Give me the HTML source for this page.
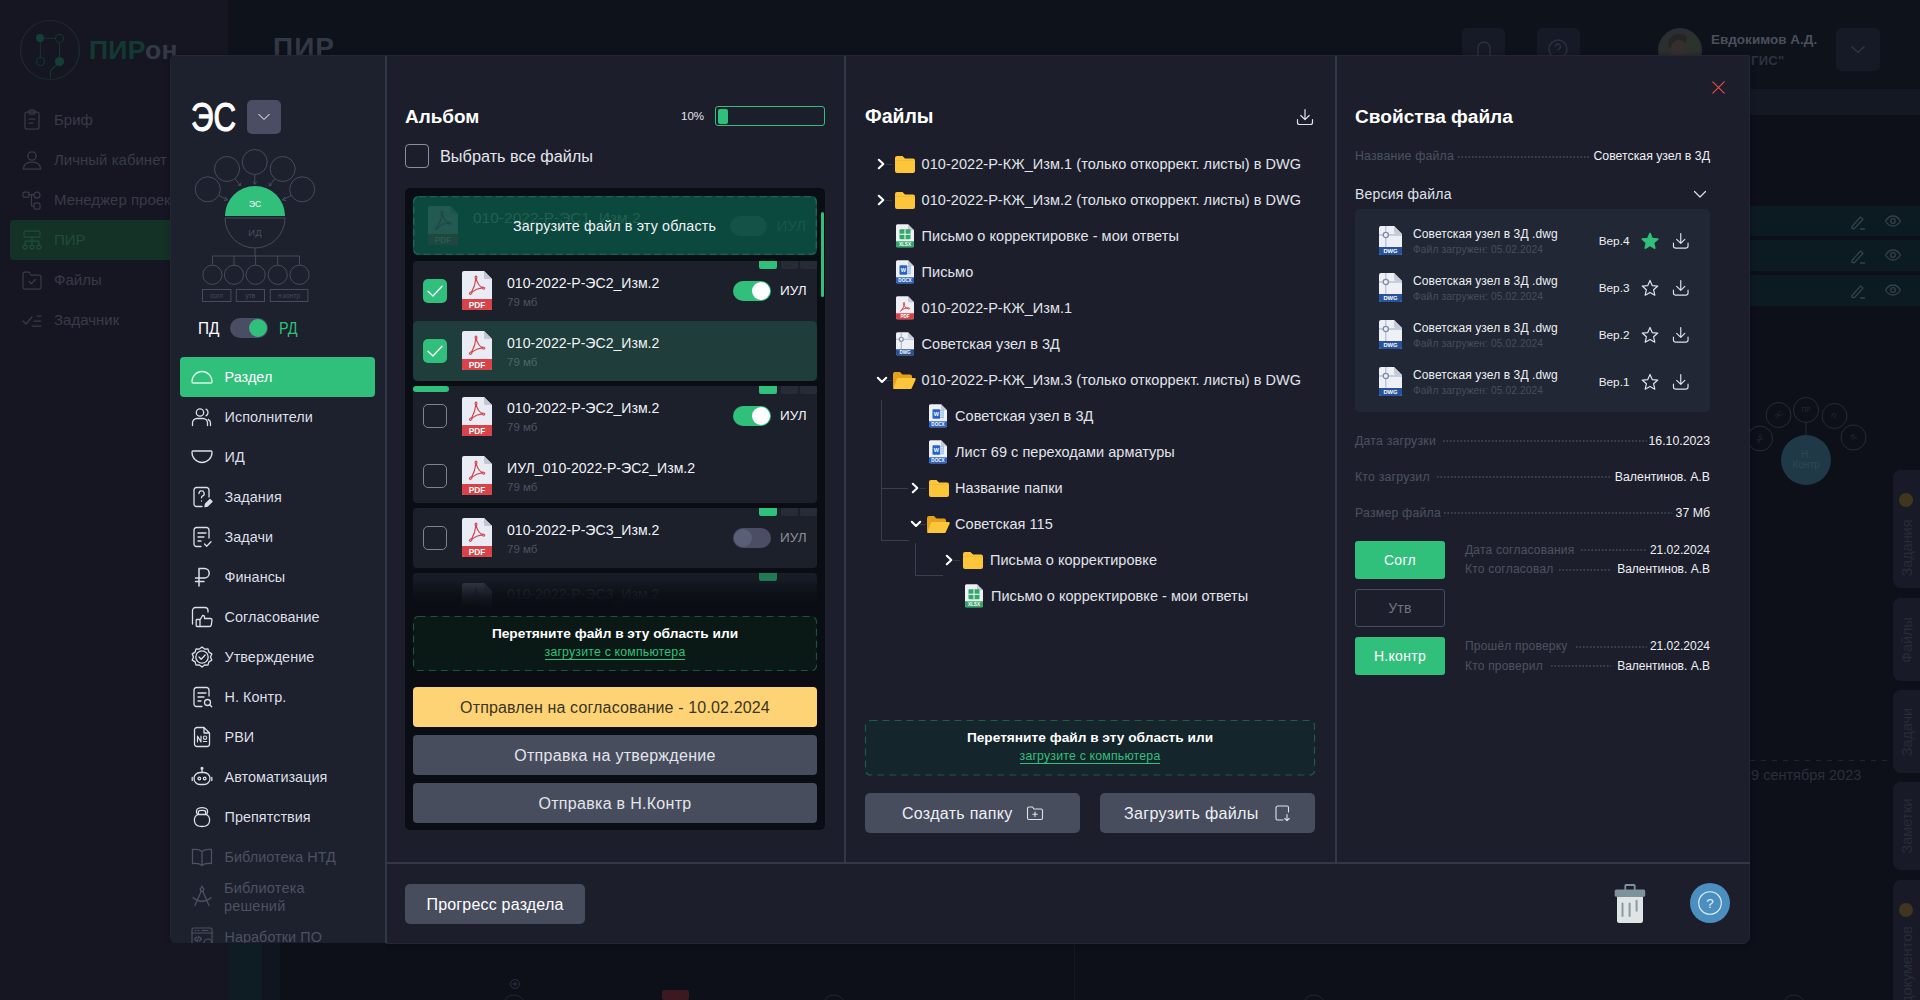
<!DOCTYPE html>
<html lang="ru"><head><meta charset="utf-8"><title>ПИРон</title>
<style>
html,body{margin:0;padding:0;}
body{width:1920px;height:1000px;overflow:hidden;background:#0f121c;position:relative;font-family:"Liberation Sans", sans-serif;}
.a{position:absolute;box-sizing:border-box;}
.t{white-space:nowrap;}
svg{overflow:visible;}
</style></head><body>
<div class="a" style="left:0px;top:0px;width:228px;height:1000px;background:#161622;"></div>
<div class="a" style="left:228px;top:0px;width:1692px;height:89px;background:#0e121b;"></div>
<div class="a" style="left:228px;top:89px;width:1692px;height:26px;background:#141823;"></div>
<div class="a" style="left:228px;top:115px;width:1692px;height:885px;background:#0d0f19;"></div>
<svg class="a" style="left:18px;top:18px;" width="64" height="64" viewBox="0 0 64 64" ><circle cx="32" cy="32" r="29.500" fill="none" stroke="#1a2a30" stroke-width="1.200"/><path d="M22 20.200H37.500M22.300 24v15.500M41.500 24.500V39M39.500 46L32.500 52.500V60" fill="none" stroke="#14362f" stroke-width="1.100"/><circle cx="22" cy="20" r="4" fill="#124037"/><circle cx="41.500" cy="20.400" r="4" fill="#161622" stroke="#14362f" stroke-width="1.100"/><circle cx="22.500" cy="43.500" r="4" fill="#161622" stroke="#14362f" stroke-width="1.100"/><circle cx="41.500" cy="43.500" r="4.600" fill="#124037"/></svg>
<div class="a t" style="left:89px;top:32px;font-size:26.500px;line-height:36px;font-weight:700;letter-spacing:0.3px;color:#123a33">ПИР<span style="color:#343947">он</span></div>
<div class="a" style="left:10px;top:220px;width:165px;height:40px;background:#143226;border-radius:4px;"></div>
<div class="a t" style="top:110.00px;font-size:15px;line-height:20px;color:#363b49;left:54px;">Бриф</div>
<div class="a t" style="top:150.00px;font-size:15px;line-height:20px;color:#363b49;left:54px;">Личный кабинет</div>
<div class="a t" style="top:190.00px;font-size:15px;line-height:20px;color:#363b49;left:54px;">Менеджер проектов</div>
<div class="a t" style="top:230.00px;font-size:15px;line-height:20px;color:#214c3d;left:54px;">ПИР</div>
<div class="a t" style="top:270.00px;font-size:15px;line-height:20px;color:#363b49;left:54px;">Файлы</div>
<div class="a t" style="top:310.00px;font-size:15px;line-height:20px;color:#363b49;left:54px;">Задачник</div>
<svg class="a" style="left:20px;top:108px;" width="24" height="24" viewBox="0 0 24 24" ><g fill="none" stroke="#363b49" stroke-width="1.250" stroke-linecap="round" stroke-linejoin="round"><rect x="5" y="4" width="14" height="17" rx="2"/><rect x="9" y="2" width="6" height="4" rx="1"/><path d="M9 11h6M9 15h4"/></g></svg>
<svg class="a" style="left:20px;top:148px;" width="24" height="24" viewBox="0 0 24 24" ><g fill="none" stroke="#363b49" stroke-width="1.250" stroke-linecap="round" stroke-linejoin="round"><circle cx="12" cy="8" r="4.2"/><path d="M3.5 21c0-4.5 3.5-7 8.500-7s8.500 2.500 8.500 7z"/></g></svg>
<svg class="a" style="left:20px;top:188px;" width="24" height="24" viewBox="0 0 24 24" ><g fill="none" stroke="#363b49" stroke-width="1.250" stroke-linecap="round" stroke-linejoin="round"><rect x="3" y="4" width="6" height="5" rx="1"/><rect x="14" y="4" width="6" height="6" rx="3"/><rect x="14" y="15" width="6" height="6" rx="1"/><path d="M9 6.500h5M11.500 6.500v11.500h2.500"/></g></svg>
<svg class="a" style="left:20px;top:228px;" width="24" height="24" viewBox="0 0 24 24" ><g fill="none" stroke="#214c3d" stroke-width="1.250" stroke-linecap="round" stroke-linejoin="round"><rect x="4" y="3" width="16" height="6" rx="1"/><path d="M12 9v4M5 17v-4h14v4"/><circle cx="5" cy="19" r="2"/><circle cx="12" cy="19" r="2"/><circle cx="19" cy="19" r="2"/><path d="M12 13v4"/></g></svg>
<svg class="a" style="left:20px;top:268px;" width="24" height="24" viewBox="0 0 24 24" ><g fill="none" stroke="#363b49" stroke-width="1.250" stroke-linecap="round" stroke-linejoin="round"><path d="M3 6a2 2 0 0 1 2-2h4l2 3h8a2 2 0 0 1 2 2v10a2 2 0 0 1-2 2H5a2 2 0 0 1-2-2z"/><path d="M9 13.500l2.200 2.200L15.500 11.500"/></g></svg>
<svg class="a" style="left:20px;top:308px;" width="24" height="24" viewBox="0 0 24 24" ><g fill="none" stroke="#363b49" stroke-width="1.250" stroke-linecap="round" stroke-linejoin="round"><path d="M3 13l3 3 6-7M12 18h9M14 13h7M17 8h4"/></g></svg>
<div class="a t" style="top:30.00px;font-size:28px;line-height:36px;color:#333846;font-weight:700;letter-spacing:1px;left:273px;">ПИР</div>
<div class="a" style="left:1462px;top:28px;width:43px;height:43px;background:#161a26;border-radius:5px;"></div>
<div class="a" style="left:1537px;top:28px;width:43px;height:43px;background:#161a26;border-radius:5px;"></div>
<div class="a" style="left:1836px;top:28px;width:44px;height:43px;background:#161a26;border-radius:5px;"></div>
<svg class="a" style="left:1472px;top:37px;" width="24" height="24" viewBox="0 0 24 24" ><path d="M6 17V11a6 6 0 0 1 12 0v6l1.500 2h-15z" fill="none" stroke="#2c3140" stroke-width="1.4"/></svg>
<svg class="a" style="left:1546px;top:37px;" width="24" height="24" viewBox="0 0 24 24" ><circle cx="12" cy="12" r="9" fill="none" stroke="#2c3140" stroke-width="1.4"/><path d="M9.500 9.500a2.500 2.500 0 1 1 3.500 2.300c-.7.400-1 .900-1 1.700" fill="none" stroke="#2c3140" stroke-width="1.4"/></svg>
<svg class="a" style="left:1848px;top:42px;" width="20" height="14" viewBox="0 0 20 14" ><path d="M3.500 4.500l6.500 6 6.500-6" fill="none" stroke="#333846" stroke-width="1.200"/></svg>
<div class="a" style="left:1658px;top:28px;width:44px;height:44px;background:#2d2e2f;border-radius:22px;overflow:hidden;border:1.500px solid #2a2e3b;"><div class="a" style="left:9px;top:5px;width:22px;height:14px;border-radius:11px 11px 4px 4px;background:#262525"></div><div class="a" style="left:12px;top:11px;width:16px;height:22px;border-radius:8px;background:#35302f"></div><div class="a" style="left:27px;top:6px;width:14px;height:26px;border-radius:7px;background:#2c322c"></div></div>
<div class="a t" style="top:31.00px;font-size:13.5px;line-height:18px;color:#4a4f5d;font-weight:700;left:1711px;">Евдокимов А.Д.</div>
<div class="a t" style="top:51.50px;font-size:13px;line-height:17px;color:#2e3340;font-weight:700;letter-spacing:0.3px;left:1751px;">ГИС"</div>
<div class="a" style="left:1750px;top:205.5px;width:170px;height:30.5px;background:#0c1a22;"></div>
<svg class="a" style="left:1849px;top:211.75px;" width="18" height="18" viewBox="0 0 18 18" ><path d="M3 14.500l8.500-9.500 2.500 2.300-8.500 9.200H3z M11 17h5" fill="none" stroke="#34404b" stroke-width="1.3" stroke-linejoin="round"/></svg>
<svg class="a" style="left:1884px;top:211.75px;" width="18" height="18" viewBox="0 0 18 18" ><path d="M1.500 9c2-3.300 4.500-5 7.500-5s5.500 1.700 7.500 5c-2 3.300-4.500 5-7.500 5s-5.500-1.700-7.500-5z" fill="none" stroke="#34404b" stroke-width="1.3"/><circle cx="9" cy="9" r="2.300" fill="none" stroke="#34404b" stroke-width="1.3"/></svg>
<div class="a" style="left:1750px;top:239.5px;width:170px;height:31px;background:#0c1a22;"></div>
<svg class="a" style="left:1849px;top:246.0px;" width="18" height="18" viewBox="0 0 18 18" ><path d="M3 14.500l8.500-9.500 2.500 2.300-8.500 9.200H3z M11 17h5" fill="none" stroke="#34404b" stroke-width="1.3" stroke-linejoin="round"/></svg>
<svg class="a" style="left:1884px;top:246.0px;" width="18" height="18" viewBox="0 0 18 18" ><path d="M1.500 9c2-3.300 4.500-5 7.500-5s5.500 1.700 7.500 5c-2 3.300-4.500 5-7.500 5s-5.500-1.700-7.500-5z" fill="none" stroke="#34404b" stroke-width="1.3"/><circle cx="9" cy="9" r="2.300" fill="none" stroke="#34404b" stroke-width="1.3"/></svg>
<div class="a" style="left:1750px;top:274.5px;width:170px;height:31px;background:#0c1a22;"></div>
<svg class="a" style="left:1849px;top:281.0px;" width="18" height="18" viewBox="0 0 18 18" ><path d="M3 14.500l8.500-9.500 2.500 2.300-8.500 9.200H3z M11 17h5" fill="none" stroke="#34404b" stroke-width="1.3" stroke-linejoin="round"/></svg>
<svg class="a" style="left:1884px;top:281.0px;" width="18" height="18" viewBox="0 0 18 18" ><path d="M1.500 9c2-3.300 4.500-5 7.500-5s5.500 1.700 7.500 5c-2 3.300-4.500 5-7.500 5s-5.500-1.700-7.500-5z" fill="none" stroke="#34404b" stroke-width="1.3"/><circle cx="9" cy="9" r="2.300" fill="none" stroke="#34404b" stroke-width="1.3"/></svg>
<svg class="a" style="left:1741.2px;top:389.6px;" width="140" height="100" viewBox="0 0 140 100" ><circle cx="19" cy="48.5" r="12.500" fill="none" stroke="#272c39" stroke-width="1"/><text x="19" y="50.7" text-anchor="middle" font-size="6.500" fill="#272c39" font-family="Liberation Sans, sans-serif" transform="rotate(-60 19 48.5)">АР</text><circle cx="37.5" cy="25" r="12.500" fill="none" stroke="#272c39" stroke-width="1"/><text x="37.5" y="27.2" text-anchor="middle" font-size="6.500" fill="#272c39" font-family="Liberation Sans, sans-serif" transform="rotate(-35 37.5 25)">ЭС</text><circle cx="65" cy="20" r="12.500" fill="none" stroke="#272c39" stroke-width="1"/><text x="65" y="22.2" text-anchor="middle" font-size="6.500" fill="#272c39" font-family="Liberation Sans, sans-serif" transform="rotate(0 65 20)">ПР</text><circle cx="93.5" cy="26" r="12.500" fill="none" stroke="#272c39" stroke-width="1"/><text x="93.5" y="28.2" text-anchor="middle" font-size="6.500" fill="#272c39" font-family="Liberation Sans, sans-serif" transform="rotate(35 93.5 26)">П.</text><circle cx="112.5" cy="47.5" r="12.500" fill="none" stroke="#272c39" stroke-width="1"/><text x="112.5" y="49.7" text-anchor="middle" font-size="6.500" fill="#272c39" font-family="Liberation Sans, sans-serif" transform="rotate(60 112.5 47.5)">КГ</text><path d="M65 32.500v13" stroke="#272c39" stroke-width="1"/><circle cx="65" cy="70" r="25" fill="#1f3947"/><text x="65" y="67.500" text-anchor="middle" font-size="10" fill="#2b4a58" font-family="Liberation Sans, sans-serif">Н.</text><text x="65" y="78" text-anchor="middle" font-size="10" fill="#2b4a58" font-family="Liberation Sans, sans-serif">Контр</text></svg>
<svg class="a" style="left:1750px;top:760px;" width="143" height="1" viewBox="0 0 143 1" ><path d="M0 .5h143" stroke="#1f2431" stroke-width="1" stroke-dasharray="5 6"/></svg>
<div class="a t" style="top:765.80px;font-size:14.5px;line-height:19px;color:#2a2f3b;left:1743px;">29 сентября 2023</div>
<div class="a" style="left:1893px;top:470px;width:40px;height:118px;background:#181b27;border-radius:8px;"></div>
<div class="a t" style="left:1847px;top:539.0px;width:120px;height:18px;line-height:18px;text-align:center;font-size:14.400px;color:#272c38;transform:rotate(-90deg);">Задания</div>
<div class="a" style="left:1893px;top:598px;width:40px;height:83px;background:#181b27;border-radius:8px;"></div>
<div class="a t" style="left:1847px;top:630.5px;width:120px;height:18px;line-height:18px;text-align:center;font-size:14.400px;color:#272c38;transform:rotate(-90deg);">Файлы</div>
<div class="a" style="left:1893px;top:690px;width:40px;height:83px;background:#181b27;border-radius:8px;"></div>
<div class="a t" style="left:1847px;top:722.5px;width:120px;height:18px;line-height:18px;text-align:center;font-size:14.400px;color:#272c38;transform:rotate(-90deg);">Задачи</div>
<div class="a" style="left:1893px;top:782px;width:40px;height:88px;background:#181b27;border-radius:8px;"></div>
<div class="a t" style="left:1847px;top:817.0px;width:120px;height:18px;line-height:18px;text-align:center;font-size:14.400px;color:#272c38;transform:rotate(-90deg);">Заметки</div>
<div class="a" style="left:1893px;top:880px;width:40px;height:130px;background:#181b27;border-radius:8px;"></div>
<div class="a t" style="left:1847px;top:956.0px;width:120px;height:18px;line-height:18px;text-align:center;font-size:14.400px;color:#272c38;transform:rotate(-90deg);">документов</div>
<div class="a" style="left:1898.5px;top:493px;width:14px;height:14px;background:#40361f;border-radius:7px;"></div>
<div class="a" style="left:1898.5px;top:903px;width:14px;height:14px;background:#40361f;border-radius:7px;"></div>
<div class="a" style="left:228px;top:943px;width:34px;height:57px;background:#0e1c23;"></div>
<div class="a" style="left:262px;top:943px;width:18px;height:57px;background:#101620;"></div>
<svg class="a" style="left:505px;top:975px;" width="22" height="25" viewBox="0 0 22 25" ><circle cx="10" cy="9" r="4.500" fill="none" stroke="#2c3140" stroke-width="1"/><path d="M10 6.500v5M7.500 9h5" stroke="#2c3140" stroke-width="1"/></svg>
<div class="a" style="left:662px;top:990px;width:27px;height:10px;background:#3c1820;border-radius:2px;"></div>
<svg class="a" style="left:502px;top:993px;" width="24" height="10" viewBox="0 0 24 10" ><circle cx="12" cy="13" r="11" fill="none" stroke="#222734" stroke-width="1"/></svg>
<svg class="a" style="left:822px;top:993px;" width="24" height="10" viewBox="0 0 24 10" ><circle cx="12" cy="13" r="11" fill="none" stroke="#222734" stroke-width="1"/></svg>
<svg class="a" style="left:1302px;top:993px;" width="24" height="10" viewBox="0 0 24 10" ><circle cx="12" cy="13" r="11" fill="none" stroke="#222734" stroke-width="1"/></svg>
<svg class="a" style="left:1782px;top:993px;" width="24" height="10" viewBox="0 0 24 10" ><circle cx="12" cy="13" r="11" fill="none" stroke="#222734" stroke-width="1"/></svg>
<div class="a" style="left:1074px;top:943px;width:1px;height:57px;background:#151925;"></div>
<div class="a" style="left:170px;top:55px;width:1580px;height:888.5px;background:#1c1f2b;border-radius:5px 0 7px 7px;box-shadow:0 0 6px rgba(0,0,0,.25);border:1px solid #232734;overflow:hidden;"><div class="a" style="left:0;top:0;width:215px;height:888px;background:#1d202d"></div></div>
<div class="a" style="left:384.5px;top:56px;width:2px;height:887px;background:#333847;"></div>
<div class="a" style="left:844.2px;top:56px;width:2px;height:806px;background:#333847;"></div>
<div class="a" style="left:1334.5px;top:56px;width:2px;height:806px;background:#333847;"></div>
<div class="a" style="left:386px;top:862px;width:1364px;height:2px;background:#333847;"></div>
<div class="a t" style="top:91.00px;font-size:40px;line-height:52px;color:#fff;left:190.5px;transform:scaleX(.78);transform-origin:0 50%;-webkit-text-stroke:1.1px #fff;">ЭС</div>
<div class="a" style="left:247px;top:100px;width:34px;height:34px;background:#4a4d63;border-radius:5px;"></div>
<svg class="a" style="left:255px;top:110px;" width="18" height="14" viewBox="0 0 18 14" ><path d="M3.500 4l5.500 5.500L14.500 4" fill="none" stroke="#fff" stroke-width="1"/></svg>
<svg class="a" style="left:190px;top:145px;" width="130" height="160" viewBox="0 0 130 160" ><g fill="none" stroke="#474c5b" stroke-width="1"><circle cx="17.800" cy="44.300" r="12.500"/><circle cx="37" cy="24" r="12.500"/><circle cx="64.800" cy="17" r="12.500"/><circle cx="92.700" cy="24" r="12.500"/><circle cx="112.200" cy="44.300" r="12.500"/><path d="M64.800 29.500v9.500M62.800 36.500l2 3 2-3M45 33.700l5.500 7M47.800 39.800l2.800 1 .1-3M84.800 33.700l-5.500 7M82 39.800l-2.800 1-.1-3M29 50.500l8.500 4.500M34.800 51.700l2.800 3.300-3.800.5M101 50.500l-8.500 4.500M95.200 51.700l-2.800 3.300 3.800.5"/><path d="M35 73a30 30 0 0 0 60 0z"/><path d="M65 103v8M22.400 120v-9h87.100v9M44 111v9M65.600 111v9M87.700 111v9"/><circle cx="22.400" cy="129.800" r="9.600"/><circle cx="44" cy="129.800" r="9.600"/><circle cx="65.600" cy="129.800" r="9.600"/><circle cx="87.700" cy="129.800" r="9.600"/><circle cx="109.500" cy="129.800" r="9.600"/><rect x="12.500" y="144.500" width="28.400" height="12"/><rect x="46.300" y="144.500" width="28.200" height="12"/><rect x="80.300" y="144.500" width="37.600" height="12"/></g><path d="M35 71a30 30 0 0 1 60 0z" fill="#31c07b"/><g font-family="Liberation Sans, sans-serif" text-anchor="middle"><text x="65" y="62" font-size="8.500" fill="#fff">ЭС</text><text x="65" y="91" font-size="9.500" fill="#474c5b">ИД</text><text x="26.700" y="153" font-size="6.500" fill="#474c5b">согл</text><text x="60.400" y="153" font-size="6.500" fill="#474c5b">утв</text><text x="99" y="153" font-size="6.500" fill="#474c5b">н.контр</text></g></svg>
<div class="a t" style="top:318.00px;font-size:17px;line-height:22px;color:#fff;left:198px;transform:scaleX(.9);transform-origin:0 50%;">ПД</div>
<div class="a" style="left:230px;top:318px;width:38px;height:20px;background:#4a4d63;border-radius:10px;"></div>
<div class="a" style="left:249px;top:319px;width:18px;height:18px;background:#31c07b;border-radius:9px;"></div>
<div class="a t" style="top:318.00px;font-size:17px;line-height:22px;color:#31c07b;left:279px;transform:scaleX(.85);transform-origin:0 50%;">РД</div>
<div class="a" style="left:180px;top:357px;width:195px;height:40px;background:#31c07b;border-radius:4px;"></div>
<div class="a t" style="top:367.50px;font-size:14.4px;line-height:19px;color:#fff;letter-spacing:0.05px;left:224.5px;">Раздел</div>
<div class="a t" style="top:407.50px;font-size:14.4px;line-height:19px;color:#dcdfe6;letter-spacing:0.05px;left:224.5px;">Исполнители</div>
<div class="a t" style="top:447.50px;font-size:14.4px;line-height:19px;color:#dcdfe6;letter-spacing:0.05px;left:224.5px;">ИД</div>
<div class="a t" style="top:487.50px;font-size:14.4px;line-height:19px;color:#dcdfe6;letter-spacing:0.05px;left:224.5px;">Задания</div>
<div class="a t" style="top:527.50px;font-size:14.4px;line-height:19px;color:#dcdfe6;letter-spacing:0.05px;left:224.5px;">Задачи</div>
<div class="a t" style="top:567.50px;font-size:14.4px;line-height:19px;color:#dcdfe6;letter-spacing:0.05px;left:224.5px;">Финансы</div>
<div class="a t" style="top:607.50px;font-size:14.4px;line-height:19px;color:#dcdfe6;letter-spacing:0.05px;left:224.5px;">Согласование</div>
<div class="a t" style="top:647.50px;font-size:14.4px;line-height:19px;color:#dcdfe6;letter-spacing:0.05px;left:224.5px;">Утверждение</div>
<div class="a t" style="top:687.50px;font-size:14.4px;line-height:19px;color:#dcdfe6;letter-spacing:0.05px;left:224.5px;">Н. Контр.</div>
<div class="a t" style="top:727.50px;font-size:14.4px;line-height:19px;color:#dcdfe6;letter-spacing:0.05px;left:224.5px;">РВИ</div>
<div class="a t" style="top:767.50px;font-size:14.4px;line-height:19px;color:#dcdfe6;letter-spacing:0.05px;left:224.5px;">Автоматизация</div>
<div class="a t" style="top:807.50px;font-size:14.4px;line-height:19px;color:#dcdfe6;letter-spacing:0.05px;left:224.5px;">Препятствия</div>
<div class="a t" style="top:847.50px;font-size:14.4px;line-height:19px;color:#4d5261;letter-spacing:0.05px;left:224.5px;">Библиотека НТД</div>
<div class="a t" style="top:927.50px;font-size:14.4px;line-height:19px;color:#4d5261;letter-spacing:0.05px;left:224.5px;">Наработки ПО</div>
<div class="a t" style="top:878.50px;font-size:14.5px;line-height:19px;color:#4d5261;letter-spacing:0.2px;left:224px;">Библиотека</div>
<div class="a t" style="top:896.50px;font-size:14.5px;line-height:19px;color:#4d5261;letter-spacing:0.2px;left:224px;">решений</div>
<svg class="a" style="left:190px;top:365px;" width="24" height="24" viewBox="0 0 24 24" ><g fill="none" stroke="#d8f5e6" stroke-width="1.3" stroke-linecap="round" stroke-linejoin="round"><path d="M2 16.500a10 10 0 0 1 20 0v.5a1 1 0 0 1-1 1H3a1 1 0 0 1-1-1z"/></g></svg>
<svg class="a" style="left:190px;top:405px;" width="24" height="24" viewBox="0 0 24 24" ><g fill="none" stroke="#dcdfe6" stroke-width="1.3" stroke-linecap="round" stroke-linejoin="round"><circle cx="10" cy="7.500" r="3.700"/><path d="M2.500 20.500v-2.500a4.500 4.500 0 0 1 4.500-4.500h6a4.500 4.500 0 0 1 4.500 4.500v2.500M16 4.200a3.700 3.700 0 0 1 0 6.600M20.500 20.500v-2.200a4.500 4.500 0 0 0-2.300-3.900"/></g></svg>
<svg class="a" style="left:190px;top:445px;" width="24" height="24" viewBox="0 0 24 24" ><g fill="none" stroke="#dcdfe6" stroke-width="1.3" stroke-linecap="round" stroke-linejoin="round"><path d="M2 7.500a10 10 0 0 0 20 0v-.5a1 1 0 0 0-1-1H3a1 1 0 0 0-1 1z"/></g></svg>
<svg class="a" style="left:190px;top:485px;" width="24" height="24" viewBox="0 0 24 24" ><g fill="none" stroke="#dcdfe6" stroke-width="1.3" stroke-linecap="round" stroke-linejoin="round"><path d="M19 12V5a2.500 2.500 0 0 0-2.500-2.500h-10A2.500 2.500 0 0 0 4 5v14a2.500 2.500 0 0 0 2.500 2.500H12"/><path d="M9 8.500a2.600 2.600 0 1 1 3.700 2.400c-.8.400-1.200 1-1.200 1.900M11.500 15.800v.2"/><path d="M15 21.500l.5-2.500 4.500-4.500 2 2-4.500 4.500z" fill="#dcdfe6"/></g></svg>
<svg class="a" style="left:190px;top:525px;" width="24" height="24" viewBox="0 0 24 24" ><g fill="none" stroke="#dcdfe6" stroke-width="1.3" stroke-linecap="round" stroke-linejoin="round"><path d="M19 13V5a2.500 2.500 0 0 0-2.500-2.500h-10A2.500 2.500 0 0 0 4 5v14a2.500 2.500 0 0 0 2.500 2.500H11"/><path d="M8 8h8M8 12h6M8 16h3M14.500 19l2.200 2.200 4.300-4.400"/></g></svg>
<svg class="a" style="left:190px;top:565px;" width="24" height="24" viewBox="0 0 24 24" ><g fill="none" stroke="#dcdfe6" stroke-width="1.5" stroke-linecap="round" stroke-linejoin="round"><path d="M9 21V3.500h5.500a4.700 4.700 0 0 1 0 9.400H5.500M5.500 16.500H14"/></g></svg>
<svg class="a" style="left:190px;top:605px;" width="24" height="24" viewBox="0 0 24 24" ><g fill="none" stroke="#dcdfe6" stroke-width="1.3" stroke-linecap="round" stroke-linejoin="round"><path d="M2.500 19V5.500a3 3 0 0 1 3-3H15a3 3 0 0 1 3 3V7"/><path d="M10 13.500h-3a.8.800 0 0 0-.8.800v5.400a.8.800 0 0 0 .8.800h3zM10 14l2.500-4.500h.5a1.500 1.500 0 0 1 1.500 1.500v1.500h6a1.500 1.500 0 0 1 1.500 1.700l-.7 4.600a2 2 0 0 1-2 1.700H10z" transform="translate(0,1)"/></g></svg>
<svg class="a" style="left:190px;top:645px;" width="24" height="24" viewBox="0 0 24 24" ><g fill="none" stroke="#dcdfe6" stroke-width="1.3" stroke-linecap="round" stroke-linejoin="round"><path d="M12 1.500l2.600 2.200 3.400-.3.900 3.300 2.900 1.800-1.300 3.100 1.300 3.100-2.900 1.800-.9 3.300-3.400-.3-2.600 2.200-2.600-2.200-3.400.3-.9-3.300-2.900-1.800 1.300-3.100-1.300-3.100 2.900-1.800.9-3.300 3.400.3z" transform="translate(0,.4)"/><circle cx="12" cy="12" r="6.200"/><path d="M9 12l2.200 2.200 4-4.200"/></g></svg>
<svg class="a" style="left:190px;top:685px;" width="24" height="24" viewBox="0 0 24 24" ><g fill="none" stroke="#dcdfe6" stroke-width="1.3" stroke-linecap="round" stroke-linejoin="round"><path d="M19 11V5a2.500 2.500 0 0 0-2.500-2.500h-10A2.500 2.500 0 0 0 4 5v14a2.500 2.500 0 0 0 2.500 2.500H12"/><path d="M8 8h8M8 12h6M8 16h3"/><circle cx="17.500" cy="17.500" r="3"/><path d="M19.700 19.700l2 2"/></g></svg>
<svg class="a" style="left:190px;top:725px;" width="24" height="24" viewBox="0 0 24 24" ><g fill="none" stroke="#dcdfe6" stroke-width="1.3" stroke-linecap="round" stroke-linejoin="round"><path d="M14 2.500H7A2.500 2.500 0 0 0 4.500 5v14A2.500 2.500 0 0 0 7 21.500h10a2.500 2.500 0 0 0 2.500-2.500V8zM14 2.500V8h5.500"/><path d="M7.500 17v-6l3.500 6v-6" stroke-width="1.200"/><circle cx="15" cy="12.700" r="1.700" stroke-width="1.100"/><path d="M13.300 16.500h3.400" stroke-width="1.100"/></g></svg>
<svg class="a" style="left:190px;top:765px;" width="24" height="24" viewBox="0 0 24 24" ><g fill="none" stroke="#dcdfe6" stroke-width="1.3" stroke-linecap="round" stroke-linejoin="round"><rect x="4" y="7.500" width="16" height="12" rx="6"/><path d="M12 7.500V4M2.200 12.500v3M21.800 12.500v3"/><circle cx="12" cy="3.200" r=".9" fill="#dcdfe6"/><circle cx="9.300" cy="13.500" r="1.300"/><circle cx="14.700" cy="13.500" r="1.300"/></g></svg>
<svg class="a" style="left:190px;top:805px;" width="24" height="24" viewBox="0 0 24 24" ><g fill="none" stroke="#dcdfe6" stroke-width="1.3" stroke-linecap="round" stroke-linejoin="round"><path d="M7.500 9.500C6 8 6 4.500 8 3.500c2-.8 6-.8 8 0 2 1 2 4.500.5 6"/><path d="M8.500 9c-.5-2 0-3 1-3.300 1.500-.4 3.500-.4 5 0 1 .3 1.500 1.300 1 3.300"/><path d="M7.500 9.500h9c2.500 1.500 3.500 4 3 7-.5 3-2.500 5-7.500 5s-7-2-7.500-5c-.5-3 .5-5.500 3-7z"/></g></svg>
<svg class="a" style="left:190px;top:845px;" width="24" height="24" viewBox="0 0 24 24" ><g fill="none" stroke="#4d5261" stroke-width="1.3" stroke-linecap="round" stroke-linejoin="round"><path d="M12 6.500c-2-2-5.500-2.500-9.500-2v14c4-.5 7.500 0 9.500 2 2-2 5.500-2.500 9.500-2v-14c-4-.5-7.500 0-9.500 2zM12 6.500v14"/></g></svg>
<svg class="a" style="left:190px;top:885px;" width="24" height="24" viewBox="0 0 24 24" ><g fill="none" stroke="#4d5261" stroke-width="1.3" stroke-linecap="round" stroke-linejoin="round"><circle cx="12" cy="4.500" r="1.800"/><path d="M11.200 6.200L5 20.500M12.800 6.200L19 20.500M3 12.500c5 5 13 5 18 0M12 1v1.700"/></g></svg>
<svg class="a" style="left:190px;top:925px;" width="24" height="24" viewBox="0 0 24 24" ><g fill="none" stroke="#4d5261" stroke-width="1.1" stroke-linecap="round" stroke-linejoin="round"><rect x="2" y="3" width="20" height="18" rx="1.500"/><path d="M2 8h20M5 5.500h1M8 5.500h1M12 5.500h6M6.500 12l-2 2 2 2M9.500 12l2 2-2 2M8.500 11.500l-1 5"/><path d="M14 21v-3a4 4 0 0 1 8 0v3" /></g></svg>
<div class="a" style="left:170px;top:943px;width:216px;height:57px;background:#161622;"></div>
<div class="a" style="left:228px;top:943px;width:34px;height:57px;background:#0e1c23;"></div>
<div class="a" style="left:262px;top:943px;width:18px;height:57px;background:#101620;"></div>
<div class="a" style="left:280px;top:943px;width:106px;height:57px;background:#0d0f19;"></div>
<div class="a t" style="top:103.50px;font-size:18.9px;line-height:25px;color:#fff;font-weight:700;left:405px;">Альбом</div>
<div class="a t" style="top:109.00px;font-size:11.5px;line-height:15px;color:#e4e6ec;left:681px;">10%</div>
<div class="a" style="left:715px;top:106px;width:110px;height:20px;border-radius:3px;border:1px solid #31c07b;"></div>
<div class="a" style="left:717.5px;top:108.5px;width:10px;height:15px;background:#31c07b;border-radius:2px;"></div>
<div class="a" style="left:405px;top:144px;width:24px;height:24px;border-radius:4px;border:1px solid #8b8f9b;"></div>
<div class="a t" style="top:146.00px;font-size:16.3px;line-height:21px;color:#e4e6ec;left:440px;">Выбрать все файлы</div>
<div class="a" style="left:405px;top:188px;width:420px;height:642px;background:#0b0d14;border-radius:5px;"></div>
<div class="a" style="left:413px;top:196px;width:404px;height:59px;background:#0b483e;border-radius:5px;"></div>
<svg class="a" style="left:413px;top:196px;" width="404" height="59" viewBox="0 0 404 59" ><rect x=".75" y=".75" width="402.500" height="57.500" rx="5" fill="none" stroke="#1e6e5d" stroke-width="1.200" stroke-dasharray="7 4"/></svg>
<svg class="a" style="left:428px;top:206px;opacity:0.1;" width="30" height="39" viewBox="0 0 30 39" ><path d="M2 0h20l8 8v29a2 2 0 0 1-2 2H2a2 2 0 0 1-2-2V2a2 2 0 0 1 2-2z" fill="#e9ebf5"/><path d="M22 0l8 8h-6.500a1.500 1.500 0 0 1-1.500-1.500z" fill="#c3c6d4"/><path d="M0 28h30v9a2 2 0 0 1-2 2H2a2 2 0 0 1-2-2z" fill="#d8434a"/><g fill="none" stroke="#d0454c" stroke-width="1.150" stroke-linecap="round"><path d="M13.800 7.800Q13.300 14.500 9.600 21M14.200 7.800Q15.800 13.800 20 16.500M9.900 21.100Q14.500 17.600 20 16.900"/><ellipse cx="14" cy="6.500" rx=".9" ry="1.400"/><ellipse cx="8.700" cy="22.100" rx="1.400" ry="1" transform="rotate(-40 8.700 22.100)"/><ellipse cx="21.400" cy="17.100" rx="1.400" ry=".9" transform="rotate(15 21.400 17.100)"/></g><text x="15" y="36.600" font-size="8.300" font-weight="700" fill="#fff" text-anchor="middle" font-family="Liberation Sans, sans-serif">PDF</text></svg>
<div class="a t" style="top:208.00px;font-size:15.5px;line-height:20px;color:#1f6152;left:473px;">010-2022-Р-ЭС1_Изм.2</div>
<div class="a" style="left:729.5px;top:216px;width:37px;height:20px;background:#145248;border-radius:10px;"></div>
<div class="a t" style="top:216.00px;font-size:15px;line-height:20px;color:#19564b;left:776.5px;">ИУЛ</div>
<div class="a t" style="top:216.50px;font-size:14.3px;line-height:19px;color:#f1f3f6;letter-spacing:0.15px;left:214.5px;width:800px;text-align:center;">Загрузите файл в эту область</div>
<div class="a" style="left:821px;top:212px;width:3px;height:85px;background:#31c07b;border-radius:2px;"></div>
<div class="a" style="left:413px;top:261px;width:404px;height:120px;background:#1c202b;border-radius:4px;"></div>
<div class="a" style="left:759px;top:261px;width:18px;height:8px;background:#31c07b;border-radius:0 0 2px 2px;"></div>
<div class="a" style="left:781px;top:261px;width:17px;height:8px;background:#262b36;border-radius:0 0 2px 2px;"></div>
<div class="a" style="left:800px;top:261px;width:17px;height:8px;background:#262b36;border-radius:0 0 2px 2px;"></div>
<div class="a" style="left:423px;top:279px;width:24px;height:24px;background:#31c07b;border-radius:5px;"></div>
<svg class="a" style="left:423px;top:279px;" width="24" height="24" viewBox="0 0 24 24" ><path d="M5 12.300l5 4.700 9-9.800" fill="none" stroke="#fff" stroke-width="1.300" stroke-linecap="round" stroke-linejoin="round"/></svg>
<svg class="a" style="left:462px;top:271px;" width="30" height="39" viewBox="0 0 30 39" ><path d="M2 0h20l8 8v29a2 2 0 0 1-2 2H2a2 2 0 0 1-2-2V2a2 2 0 0 1 2-2z" fill="#e9ebf5"/><path d="M22 0l8 8h-6.500a1.500 1.500 0 0 1-1.500-1.500z" fill="#c3c6d4"/><path d="M0 28h30v9a2 2 0 0 1-2 2H2a2 2 0 0 1-2-2z" fill="#d8434a"/><g fill="none" stroke="#d0454c" stroke-width="1.150" stroke-linecap="round"><path d="M13.800 7.800Q13.300 14.500 9.600 21M14.200 7.800Q15.800 13.800 20 16.500M9.900 21.100Q14.500 17.600 20 16.900"/><ellipse cx="14" cy="6.500" rx=".9" ry="1.400"/><ellipse cx="8.700" cy="22.100" rx="1.400" ry="1" transform="rotate(-40 8.700 22.100)"/><ellipse cx="21.400" cy="17.100" rx="1.400" ry=".9" transform="rotate(15 21.400 17.100)"/></g><text x="15" y="36.600" font-size="8.300" font-weight="700" fill="#fff" text-anchor="middle" font-family="Liberation Sans, sans-serif">PDF</text></svg>
<div class="a t" style="top:273.50px;font-size:14.1px;line-height:18px;color:#f1f3f6;left:507px;">010-2022-Р-ЭС2_Изм.2</div>
<div class="a t" style="top:294.50px;font-size:11.5px;line-height:15px;color:#4d5261;left:507px;">79 мб</div>
<div class="a" style="left:733px;top:281px;width:38px;height:20px;background:#31c07b;border-radius:10px;"></div>
<div class="a" style="left:752px;top:282px;width:18px;height:18px;background:#fff;border-radius:9px;"></div>
<div class="a t" style="top:282.30px;font-size:13.5px;line-height:18px;color:#f1f3f6;left:780px;">ИУЛ</div>
<div class="a" style="left:413px;top:321px;width:404px;height:60px;background:#1e3d3b;border-radius:5px;"></div>
<div class="a" style="left:423px;top:339px;width:24px;height:24px;background:#31c07b;border-radius:5px;"></div>
<svg class="a" style="left:423px;top:339px;" width="24" height="24" viewBox="0 0 24 24" ><path d="M5 12.300l5 4.700 9-9.800" fill="none" stroke="#fff" stroke-width="1.300" stroke-linecap="round" stroke-linejoin="round"/></svg>
<svg class="a" style="left:462px;top:331.3px;" width="30" height="39" viewBox="0 0 30 39" ><path d="M2 0h20l8 8v29a2 2 0 0 1-2 2H2a2 2 0 0 1-2-2V2a2 2 0 0 1 2-2z" fill="#e9ebf5"/><path d="M22 0l8 8h-6.500a1.500 1.500 0 0 1-1.500-1.500z" fill="#c3c6d4"/><path d="M0 28h30v9a2 2 0 0 1-2 2H2a2 2 0 0 1-2-2z" fill="#d8434a"/><g fill="none" stroke="#d0454c" stroke-width="1.150" stroke-linecap="round"><path d="M13.800 7.800Q13.300 14.500 9.600 21M14.200 7.800Q15.800 13.800 20 16.500M9.900 21.100Q14.500 17.600 20 16.900"/><ellipse cx="14" cy="6.500" rx=".9" ry="1.400"/><ellipse cx="8.700" cy="22.100" rx="1.400" ry="1" transform="rotate(-40 8.700 22.100)"/><ellipse cx="21.400" cy="17.100" rx="1.400" ry=".9" transform="rotate(15 21.400 17.100)"/></g><text x="15" y="36.600" font-size="8.300" font-weight="700" fill="#fff" text-anchor="middle" font-family="Liberation Sans, sans-serif">PDF</text></svg>
<div class="a t" style="top:333.50px;font-size:14.1px;line-height:18px;color:#f1f3f6;left:507px;">010-2022-Р-ЭС2_Изм.2</div>
<div class="a t" style="top:354.50px;font-size:11.5px;line-height:15px;color:#4a6a66;left:507px;">79 мб</div>
<div class="a" style="left:413px;top:386px;width:404px;height:117px;background:#1c202b;border-radius:4px;"></div>
<div class="a" style="left:759px;top:386px;width:18px;height:8px;background:#31c07b;border-radius:0 0 2px 2px;"></div>
<div class="a" style="left:781px;top:386px;width:17px;height:8px;background:#262b36;border-radius:0 0 2px 2px;"></div>
<div class="a" style="left:800px;top:386px;width:17px;height:8px;background:#262b36;border-radius:0 0 2px 2px;"></div>
<div class="a" style="left:413px;top:386px;width:36px;height:6px;background:#31c07b;border-radius:4px 4px 4px 4px;"></div>
<div class="a" style="left:423px;top:404px;width:24px;height:24px;border-radius:5px;border:1px solid #7f8390;"></div>
<svg class="a" style="left:462px;top:396.5px;" width="30" height="39" viewBox="0 0 30 39" ><path d="M2 0h20l8 8v29a2 2 0 0 1-2 2H2a2 2 0 0 1-2-2V2a2 2 0 0 1 2-2z" fill="#e9ebf5"/><path d="M22 0l8 8h-6.500a1.500 1.500 0 0 1-1.500-1.500z" fill="#c3c6d4"/><path d="M0 28h30v9a2 2 0 0 1-2 2H2a2 2 0 0 1-2-2z" fill="#d8434a"/><g fill="none" stroke="#d0454c" stroke-width="1.150" stroke-linecap="round"><path d="M13.800 7.800Q13.300 14.500 9.600 21M14.200 7.800Q15.800 13.800 20 16.500M9.900 21.100Q14.500 17.600 20 16.900"/><ellipse cx="14" cy="6.500" rx=".9" ry="1.400"/><ellipse cx="8.700" cy="22.100" rx="1.400" ry="1" transform="rotate(-40 8.700 22.100)"/><ellipse cx="21.400" cy="17.100" rx="1.400" ry=".9" transform="rotate(15 21.400 17.100)"/></g><text x="15" y="36.600" font-size="8.300" font-weight="700" fill="#fff" text-anchor="middle" font-family="Liberation Sans, sans-serif">PDF</text></svg>
<div class="a t" style="top:398.50px;font-size:14.1px;line-height:18px;color:#f1f3f6;left:507px;">010-2022-Р-ЭС2_Изм.2</div>
<div class="a t" style="top:419.50px;font-size:11.5px;line-height:15px;color:#4d5261;left:507px;">79 мб</div>
<div class="a" style="left:733px;top:406px;width:38px;height:20px;background:#31c07b;border-radius:10px;"></div>
<div class="a" style="left:752px;top:407px;width:18px;height:18px;background:#fff;border-radius:9px;"></div>
<div class="a t" style="top:407.30px;font-size:13.5px;line-height:18px;color:#f1f3f6;left:780px;">ИУЛ</div>
<div class="a" style="left:423px;top:464px;width:24px;height:24px;border-radius:5px;border:1px solid #7f8390;"></div>
<svg class="a" style="left:462px;top:456.4px;" width="30" height="39" viewBox="0 0 30 39" ><path d="M2 0h20l8 8v29a2 2 0 0 1-2 2H2a2 2 0 0 1-2-2V2a2 2 0 0 1 2-2z" fill="#e9ebf5"/><path d="M22 0l8 8h-6.500a1.500 1.500 0 0 1-1.500-1.500z" fill="#c3c6d4"/><path d="M0 28h30v9a2 2 0 0 1-2 2H2a2 2 0 0 1-2-2z" fill="#d8434a"/><g fill="none" stroke="#d0454c" stroke-width="1.150" stroke-linecap="round"><path d="M13.800 7.800Q13.300 14.500 9.600 21M14.200 7.800Q15.800 13.800 20 16.500M9.900 21.100Q14.500 17.600 20 16.900"/><ellipse cx="14" cy="6.500" rx=".9" ry="1.400"/><ellipse cx="8.700" cy="22.100" rx="1.400" ry="1" transform="rotate(-40 8.700 22.100)"/><ellipse cx="21.400" cy="17.100" rx="1.400" ry=".9" transform="rotate(15 21.400 17.100)"/></g><text x="15" y="36.600" font-size="8.300" font-weight="700" fill="#fff" text-anchor="middle" font-family="Liberation Sans, sans-serif">PDF</text></svg>
<div class="a t" style="top:458.50px;font-size:14.1px;line-height:18px;color:#f1f3f6;left:507px;">ИУЛ_010-2022-Р-ЭС2_Изм.2</div>
<div class="a t" style="top:479.50px;font-size:11.5px;line-height:15px;color:#4d5261;left:507px;">79 мб</div>
<div class="a" style="left:413px;top:508px;width:404px;height:60px;background:#1c202b;border-radius:4px;"></div>
<div class="a" style="left:759px;top:508px;width:18px;height:8px;background:#31c07b;border-radius:0 0 2px 2px;"></div>
<div class="a" style="left:781px;top:508px;width:17px;height:8px;background:#262b36;border-radius:0 0 2px 2px;"></div>
<div class="a" style="left:800px;top:508px;width:17px;height:8px;background:#262b36;border-radius:0 0 2px 2px;"></div>
<div class="a" style="left:423px;top:526px;width:24px;height:24px;border-radius:5px;border:1px solid #7f8390;"></div>
<svg class="a" style="left:462px;top:518px;" width="30" height="39" viewBox="0 0 30 39" ><path d="M2 0h20l8 8v29a2 2 0 0 1-2 2H2a2 2 0 0 1-2-2V2a2 2 0 0 1 2-2z" fill="#e9ebf5"/><path d="M22 0l8 8h-6.500a1.500 1.500 0 0 1-1.500-1.500z" fill="#c3c6d4"/><path d="M0 28h30v9a2 2 0 0 1-2 2H2a2 2 0 0 1-2-2z" fill="#d8434a"/><g fill="none" stroke="#d0454c" stroke-width="1.150" stroke-linecap="round"><path d="M13.800 7.800Q13.300 14.500 9.600 21M14.200 7.800Q15.800 13.800 20 16.500M9.900 21.100Q14.500 17.600 20 16.900"/><ellipse cx="14" cy="6.500" rx=".9" ry="1.400"/><ellipse cx="8.700" cy="22.100" rx="1.400" ry="1" transform="rotate(-40 8.700 22.100)"/><ellipse cx="21.400" cy="17.100" rx="1.400" ry=".9" transform="rotate(15 21.400 17.100)"/></g><text x="15" y="36.600" font-size="8.300" font-weight="700" fill="#fff" text-anchor="middle" font-family="Liberation Sans, sans-serif">PDF</text></svg>
<div class="a t" style="top:520.50px;font-size:14.1px;line-height:18px;color:#f1f3f6;left:507px;">010-2022-Р-ЭС3_Изм.2</div>
<div class="a t" style="top:541.50px;font-size:11.5px;line-height:15px;color:#4d5261;left:507px;">79 мб</div>
<div class="a" style="left:733px;top:528px;width:38px;height:20px;background:#4a4d63;border-radius:10px;"></div>
<div class="a" style="left:734px;top:529px;width:18px;height:18px;background:#5b5e77;border-radius:9px;"></div>
<div class="a t" style="top:529.30px;font-size:13.5px;line-height:18px;color:#8a8e9b;left:780px;">ИУЛ</div>
<div class="a" style="left:413px;top:572.5px;width:404px;height:43px;background:linear-gradient(#181d28 0,#11151d 55%,#0b0d14 100%);border-radius:4px 4px 0 0;overflow:hidden;"></div>
<div class="a" style="left:759px;top:572.5px;width:18px;height:8px;background:#1f7a55;border-radius:0 0 2px 2px;"></div>
<svg class="a" style="left:462px;top:583px;" width="30" height="39" viewBox="0 0 30 39" ><path d="M2 0h20l8 8v29a2 2 0 0 1-2 2H2a2 2 0 0 1-2-2V2a2 2 0 0 1 2-2z" fill="#353a47"/><path d="M22 0l8 8h-6.500a1.500 1.500 0 0 1-1.500-1.500z" fill="#2e323e"/><path d="M0 28h30v9a2 2 0 0 1-2 2H2a2 2 0 0 1-2-2z" fill="#2a2e3a"/><g fill="none" stroke="#2a2e3a" stroke-width="1.150" stroke-linecap="round"><path d="M13.800 7.800Q13.300 14.500 9.600 21M14.200 7.800Q15.800 13.800 20 16.500M9.900 21.100Q14.500 17.600 20 16.900"/><ellipse cx="14" cy="6.500" rx=".9" ry="1.400"/><ellipse cx="8.700" cy="22.100" rx="1.400" ry="1" transform="rotate(-40 8.700 22.100)"/><ellipse cx="21.400" cy="17.100" rx="1.400" ry=".9" transform="rotate(15 21.400 17.100)"/></g><text x="15" y="36.600" font-size="8.300" font-weight="700" fill="#3e4350" text-anchor="middle" font-family="Liberation Sans, sans-serif">PDF</text></svg>
<div class="a t" style="top:585.00px;font-size:14.1px;line-height:18px;color:#2e3340;left:507px;">010-2022-Р-ЭС3_Изм.2</div>
<div class="a" style="left:413px;top:580px;width:404px;height:36px;background:linear-gradient(rgba(11,13,20,0) 0,rgba(11,13,20,.75) 45%,#0b0d14 75%);"></div>
<div class="a" style="left:413px;top:615.5px;width:404px;height:55px;background:#0b1916;border-radius:5px;"></div>
<svg class="a" style="left:413px;top:615.5px;" width="404" height="55" viewBox="0 0 404 55" ><rect x=".5" y=".5" width="403" height="54" rx="5" fill="none" stroke="#1d5340" stroke-width="1.200" stroke-dasharray="7 5"/></svg>
<div class="a t" style="top:625.20px;font-size:13.7px;line-height:18px;color:#fff;font-weight:700;left:215px;width:800px;text-align:center;">Перетяните файл в эту область или</div>
<div class="a t" style="left:215px;width:800px;text-align:center;top:643.5px;font-size:12.300px;line-height:16px;color:#31c07b;letter-spacing:.2px"><span style="border-bottom:1px solid #31c07b;padding-bottom:0px">загрузите с компьютера</span></div>
<div class="a" style="left:413px;top:687px;width:404px;height:40px;background:#fed376;border-radius:4px;"></div>
<div class="a t" style="top:697.00px;font-size:16px;line-height:21px;color:#3b351f;letter-spacing:0.15px;left:215px;width:800px;text-align:center;">Отправлен на согласование - 10.02.2024</div>
<div class="a" style="left:413px;top:735px;width:404px;height:39.5px;background:#484d5e;border-radius:4px;"></div>
<div class="a t" style="top:744.80px;font-size:16px;line-height:21px;color:#e2e5eb;letter-spacing:0.3px;left:215px;width:800px;text-align:center;">Отправка на утверждение</div>
<div class="a" style="left:413px;top:783px;width:404px;height:39.5px;background:#484d5e;border-radius:4px;"></div>
<div class="a t" style="top:792.80px;font-size:16px;line-height:21px;color:#e2e5eb;letter-spacing:0.3px;left:215px;width:800px;text-align:center;">Отправка в Н.Контр</div>
<div class="a" style="left:405px;top:884px;width:180px;height:40px;background:#484d5e;border-radius:5px;"></div>
<div class="a t" style="top:893.80px;font-size:16px;line-height:21px;color:#fff;letter-spacing:0.2px;left:95px;width:800px;text-align:center;">Прогресс раздела</div>
<div class="a t" style="top:103.50px;font-size:19.5px;line-height:25px;color:#fff;font-weight:700;left:865px;">Файлы</div>
<svg class="a" style="left:1296px;top:108px;" width="18" height="18" viewBox="0 0 18 18" ><g fill="none" stroke="#dfe2ea" stroke-width="1.2" stroke-linecap="round" stroke-linejoin="round"><path d="M9 1.500v10M4.800 7.500L9 11.700l4.200-4.200M1.500 11.500v3a2 2 0 0 0 2 2h11a2 2 0 0 0 2-2v-3"/></g></svg>
<div class="a" style="left:880.5px;top:400px;width:1px;height:140px;background:#3a3f4e;"></div>
<div class="a" style="left:880.5px;top:488px;width:27px;height:1px;background:#3a3f4e;"></div>
<div class="a" style="left:880.5px;top:540px;width:28px;height:1px;background:#3a3f4e;"></div>
<div class="a" style="left:914.5px;top:543px;width:1px;height:33px;background:#3a3f4e;"></div>
<div class="a" style="left:914.5px;top:575px;width:28px;height:1px;background:#3a3f4e;"></div>
<div class="a" style="left:886px;top:163.5px;width:6px;height:1.5px;background:#2f3a45;"></div>
<svg class="a" style="left:877px;top:158px;" width="8" height="12" viewBox="0 0 8 12" ><path d="M1.800 1.800L6.300 6 1.800 10.200" fill="none" stroke="#fff" stroke-width="2.100" stroke-linecap="round" stroke-linejoin="round"/></svg>
<svg class="a" style="left:895px;top:155.5px;" width="20" height="17" viewBox="0 0 20 17" ><path d="M0 2a2 2 0 0 1 2-2h5.500l2.500 2.500H18a2 2 0 0 1 2 2V15a2 2 0 0 1-2 2H2a2 2 0 0 1-2-2z" fill="#fcc53a"/><path d="M0 4.500h20" stroke="#e5a11c" stroke-width=".6" opacity=".5"/></svg>
<div class="a t" style="top:154.50px;font-size:14.5px;line-height:19px;color:#e1e4ea;letter-spacing:0.05px;left:921.6px;">010-2022-Р-КЖ_Изм.1 (только откоррект. листы) в DWG</div>
<div class="a" style="left:886px;top:199.5px;width:6px;height:1.5px;background:#2f3a45;"></div>
<svg class="a" style="left:877px;top:194px;" width="8" height="12" viewBox="0 0 8 12" ><path d="M1.800 1.800L6.300 6 1.800 10.200" fill="none" stroke="#fff" stroke-width="2.100" stroke-linecap="round" stroke-linejoin="round"/></svg>
<svg class="a" style="left:895px;top:191.5px;" width="20" height="17" viewBox="0 0 20 17" ><path d="M0 2a2 2 0 0 1 2-2h5.500l2.500 2.500H18a2 2 0 0 1 2 2V15a2 2 0 0 1-2 2H2a2 2 0 0 1-2-2z" fill="#fcc53a"/><path d="M0 4.500h20" stroke="#e5a11c" stroke-width=".6" opacity=".5"/></svg>
<div class="a t" style="top:190.50px;font-size:14.5px;line-height:19px;color:#e1e4ea;letter-spacing:0.05px;left:921.6px;">010-2022-Р-КЖ_Изм.2 (только откоррект. листы) в DWG</div>
<svg class="a" style="left:896px;top:223.8px;" width="18" height="23.5" viewBox="0 0 18 23" ><path d="M1.500 0h10.500l6 6v15.500a1.500 1.500 0 0 1-1.500 1.500h-15A1.500 1.500 0 0 1 0 21.500v-20A1.500 1.500 0 0 1 1.500 0z" fill="#eef0f5"/><path d="M12 0l6 6h-4.500A1.500 1.500 0 0 1 12 4.500z" fill="#c6cad6"/><path d="M0 17h18v4.500a1.500 1.500 0 0 1-1.500 1.500h-15A1.500 1.500 0 0 1 0 21.500z" fill="#2fa968"/><text x="9" y="21.800" font-size="4.600" font-weight="700" fill="#fff" text-anchor="middle" font-family="Liberation Sans, sans-serif">XLSX</text><rect x="3.500" y="5" width="11" height="10" rx="1" fill="#2fa968"/><path d="M3.500 10h11M9 5v10" stroke="#fff" stroke-width="1"/></svg>
<div class="a t" style="top:226.50px;font-size:14.5px;line-height:19px;color:#e1e4ea;letter-spacing:0.05px;left:921.6px;">Письмо о корректировке - мои ответы</div>
<svg class="a" style="left:896px;top:259.8px;" width="18" height="23.5" viewBox="0 0 18 23" ><path d="M1.500 0h10.500l6 6v15.500a1.500 1.500 0 0 1-1.500 1.500h-15A1.500 1.500 0 0 1 0 21.500v-20A1.500 1.500 0 0 1 1.500 0z" fill="#eef0f5"/><path d="M12 0l6 6h-4.500A1.500 1.500 0 0 1 12 4.500z" fill="#c6cad6"/><path d="M0 17h18v4.500a1.500 1.500 0 0 1-1.500 1.500h-15A1.500 1.500 0 0 1 0 21.500z" fill="#2a63c4"/><text x="9" y="21.800" font-size="4.600" font-weight="700" fill="#fff" text-anchor="middle" font-family="Liberation Sans, sans-serif">DOCX</text><rect x="10" y="5.500" width="4.800" height="8.500" fill="#9cc2ea"/><path d="M11 7.500h3M11 9.700h3M11 11.900h3" stroke="#e9f1fb" stroke-width=".8"/><rect x="3.500" y="5" width="7.500" height="9.500" rx=".8" fill="#2a63c4"/><text x="7.250" y="12" font-size="5.500" font-weight="700" fill="#fff" text-anchor="middle" font-family="Liberation Sans, sans-serif">W</text></svg>
<div class="a t" style="top:262.50px;font-size:14.5px;line-height:19px;color:#e1e4ea;letter-spacing:0.05px;left:921.6px;">Письмо</div>
<svg class="a" style="left:896px;top:295.8px;" width="18" height="23.5" viewBox="0 0 18 23" ><path d="M1.500 0h10.500l6 6v15.500a1.500 1.500 0 0 1-1.500 1.500h-15A1.500 1.500 0 0 1 0 21.500v-20A1.500 1.500 0 0 1 1.500 0z" fill="#eef0f5"/><path d="M12 0l6 6h-4.500A1.500 1.500 0 0 1 12 4.500z" fill="#c6cad6"/><path d="M0 17h18v4.500a1.500 1.500 0 0 1-1.500 1.500h-15A1.500 1.500 0 0 1 0 21.500z" fill="#d8434a"/><text x="9" y="21.800" font-size="4.600" font-weight="700" fill="#fff" text-anchor="middle" font-family="Liberation Sans, sans-serif">PDF</text><path d="M5 14.500c1.500-1.500 3.300-5 3.600-7.200.2-1.400-1.200-1.600-1.200-.2 0 1.800 1.800 4.800 5.100 5.600 1.400.3 1.600-1 .2-1.100-2.100-.2-5.700.9-7.500 2.500-1 1-1 1.400-.2.400z" fill="none" stroke="#d8434a" stroke-width="1" stroke-linejoin="round"/></svg>
<div class="a t" style="top:298.50px;font-size:14.5px;line-height:19px;color:#e1e4ea;letter-spacing:0.05px;left:921.6px;">010-2022-Р-КЖ_Изм.1</div>
<svg class="a" style="left:896px;top:331.8px;" width="18" height="23.5" viewBox="0 0 18 23" ><path d="M1.500 0h10.500l6 6v15.500a1.500 1.500 0 0 1-1.500 1.500h-15A1.500 1.500 0 0 1 0 21.500v-20A1.500 1.500 0 0 1 1.500 0z" fill="#eef0f5"/><path d="M12 0l6 6h-4.500A1.500 1.500 0 0 1 12 4.500z" fill="#c6cad6"/><path d="M0 17h18v4.500a1.500 1.500 0 0 1-1.500 1.500h-15A1.500 1.500 0 0 1 0 21.500z" fill="#27539a"/><text x="9" y="21.800" font-size="4.600" font-weight="700" fill="#fff" text-anchor="middle" font-family="Liberation Sans, sans-serif">DWG</text><path d="M5.300 0v17M0 7h18" stroke="#b3b8c6" stroke-width="1.100"/><circle cx="5.300" cy="7" r="2" fill="#eef0f5" stroke="#7f8aa3" stroke-width="1.100"/></svg>
<div class="a t" style="top:334.50px;font-size:14.5px;line-height:19px;color:#e1e4ea;letter-spacing:0.05px;left:921.6px;">Советская узел в 3Д</div>
<div class="a" style="left:886px;top:379.5px;width:6px;height:1.5px;background:#2f3a45;"></div>
<svg class="a" style="left:876px;top:376px;" width="12" height="8" viewBox="0 0 12 8" ><path d="M1.800 1.800L6 6l4.200-4.200" fill="none" stroke="#fff" stroke-width="2.100" stroke-linecap="round" stroke-linejoin="round"/></svg>
<svg class="a" style="left:892px;top:371.5px;" width="24" height="17" viewBox="0 0 24 17" ><path d="M1 2a2 2 0 0 1 2-2h5l2.500 2.500H18a2 2 0 0 1 2 2V15a2 2 0 0 1-2 2H3a2 2 0 0 1-2-2z" fill="#e5a11c"/><path d="M5.200 6h17.300a1.200 1.200 0 0 1 1.100 1.700l-3.800 8.300a1.700 1.700 0 0 1-1.600 1H1.200z" fill="#fcc53a"/></svg>
<div class="a t" style="top:370.50px;font-size:14.5px;line-height:19px;color:#e1e4ea;letter-spacing:0.05px;left:921.6px;">010-2022-Р-КЖ_Изм.3 (только откоррект. листы) в DWG</div>
<svg class="a" style="left:929px;top:403.8px;" width="18" height="23.5" viewBox="0 0 18 23" ><path d="M1.500 0h10.500l6 6v15.500a1.500 1.500 0 0 1-1.500 1.500h-15A1.500 1.500 0 0 1 0 21.500v-20A1.500 1.500 0 0 1 1.500 0z" fill="#eef0f5"/><path d="M12 0l6 6h-4.500A1.500 1.500 0 0 1 12 4.500z" fill="#c6cad6"/><path d="M0 17h18v4.500a1.500 1.500 0 0 1-1.500 1.500h-15A1.500 1.500 0 0 1 0 21.500z" fill="#2a63c4"/><text x="9" y="21.800" font-size="4.600" font-weight="700" fill="#fff" text-anchor="middle" font-family="Liberation Sans, sans-serif">DOCX</text><rect x="10" y="5.500" width="4.800" height="8.500" fill="#9cc2ea"/><path d="M11 7.500h3M11 9.700h3M11 11.900h3" stroke="#e9f1fb" stroke-width=".8"/><rect x="3.500" y="5" width="7.500" height="9.500" rx=".8" fill="#2a63c4"/><text x="7.250" y="12" font-size="5.500" font-weight="700" fill="#fff" text-anchor="middle" font-family="Liberation Sans, sans-serif">W</text></svg>
<div class="a t" style="top:406.50px;font-size:14.5px;line-height:19px;color:#e1e4ea;letter-spacing:0.05px;left:955px;">Советская узел в 3Д</div>
<svg class="a" style="left:929px;top:439.8px;" width="18" height="23.5" viewBox="0 0 18 23" ><path d="M1.500 0h10.500l6 6v15.500a1.500 1.500 0 0 1-1.500 1.500h-15A1.500 1.500 0 0 1 0 21.500v-20A1.500 1.500 0 0 1 1.500 0z" fill="#eef0f5"/><path d="M12 0l6 6h-4.500A1.500 1.500 0 0 1 12 4.500z" fill="#c6cad6"/><path d="M0 17h18v4.500a1.500 1.500 0 0 1-1.500 1.500h-15A1.500 1.500 0 0 1 0 21.500z" fill="#2a63c4"/><text x="9" y="21.800" font-size="4.600" font-weight="700" fill="#fff" text-anchor="middle" font-family="Liberation Sans, sans-serif">DOCX</text><rect x="10" y="5.500" width="4.800" height="8.500" fill="#9cc2ea"/><path d="M11 7.500h3M11 9.700h3M11 11.900h3" stroke="#e9f1fb" stroke-width=".8"/><rect x="3.500" y="5" width="7.500" height="9.500" rx=".8" fill="#2a63c4"/><text x="7.250" y="12" font-size="5.500" font-weight="700" fill="#fff" text-anchor="middle" font-family="Liberation Sans, sans-serif">W</text></svg>
<div class="a t" style="top:442.50px;font-size:14.5px;line-height:19px;color:#e1e4ea;letter-spacing:0.05px;left:955px;">Лист 69 с переходами арматуры</div>
<div class="a" style="left:920px;top:487.5px;width:6px;height:1.5px;background:#2f3a45;"></div>
<svg class="a" style="left:911px;top:482px;" width="8" height="12" viewBox="0 0 8 12" ><path d="M1.800 1.800L6.300 6 1.800 10.200" fill="none" stroke="#fff" stroke-width="2.100" stroke-linecap="round" stroke-linejoin="round"/></svg>
<svg class="a" style="left:929px;top:479.5px;" width="20" height="17" viewBox="0 0 20 17" ><path d="M0 2a2 2 0 0 1 2-2h5.500l2.500 2.500H18a2 2 0 0 1 2 2V15a2 2 0 0 1-2 2H2a2 2 0 0 1-2-2z" fill="#fcc53a"/><path d="M0 4.500h20" stroke="#e5a11c" stroke-width=".6" opacity=".5"/></svg>
<div class="a t" style="top:478.50px;font-size:14.5px;line-height:19px;color:#e1e4ea;letter-spacing:0.05px;left:955px;">Название папки</div>
<div class="a" style="left:920px;top:523.5px;width:6px;height:1.5px;background:#2f3a45;"></div>
<svg class="a" style="left:910px;top:520px;" width="12" height="8" viewBox="0 0 12 8" ><path d="M1.800 1.800L6 6l4.200-4.200" fill="none" stroke="#fff" stroke-width="2.100" stroke-linecap="round" stroke-linejoin="round"/></svg>
<svg class="a" style="left:926px;top:515.5px;" width="24" height="17" viewBox="0 0 24 17" ><path d="M1 2a2 2 0 0 1 2-2h5l2.500 2.500H18a2 2 0 0 1 2 2V15a2 2 0 0 1-2 2H3a2 2 0 0 1-2-2z" fill="#e5a11c"/><path d="M5.200 6h17.300a1.200 1.200 0 0 1 1.100 1.700l-3.800 8.300a1.700 1.700 0 0 1-1.600 1H1.200z" fill="#fcc53a"/></svg>
<div class="a t" style="top:514.50px;font-size:14.5px;line-height:19px;color:#e1e4ea;letter-spacing:0.05px;left:955px;">Советская 115</div>
<div class="a" style="left:954px;top:559.5px;width:6px;height:1.5px;background:#2f3a45;"></div>
<svg class="a" style="left:945px;top:554px;" width="8" height="12" viewBox="0 0 8 12" ><path d="M1.800 1.800L6.300 6 1.800 10.200" fill="none" stroke="#fff" stroke-width="2.100" stroke-linecap="round" stroke-linejoin="round"/></svg>
<svg class="a" style="left:963px;top:551.5px;" width="20" height="17" viewBox="0 0 20 17" ><path d="M0 2a2 2 0 0 1 2-2h5.500l2.500 2.500H18a2 2 0 0 1 2 2V15a2 2 0 0 1-2 2H2a2 2 0 0 1-2-2z" fill="#fcc53a"/><path d="M0 4.500h20" stroke="#e5a11c" stroke-width=".6" opacity=".5"/></svg>
<div class="a t" style="top:550.50px;font-size:14.5px;line-height:19px;color:#e1e4ea;letter-spacing:0.05px;left:990px;">Письма о корректировке</div>
<svg class="a" style="left:965px;top:583.8px;" width="18" height="23.5" viewBox="0 0 18 23" ><path d="M1.500 0h10.500l6 6v15.500a1.500 1.500 0 0 1-1.500 1.500h-15A1.500 1.500 0 0 1 0 21.500v-20A1.500 1.500 0 0 1 1.500 0z" fill="#eef0f5"/><path d="M12 0l6 6h-4.500A1.500 1.500 0 0 1 12 4.500z" fill="#c6cad6"/><path d="M0 17h18v4.500a1.500 1.500 0 0 1-1.500 1.500h-15A1.500 1.500 0 0 1 0 21.500z" fill="#2fa968"/><text x="9" y="21.800" font-size="4.600" font-weight="700" fill="#fff" text-anchor="middle" font-family="Liberation Sans, sans-serif">XLSX</text><rect x="3.500" y="5" width="11" height="10" rx="1" fill="#2fa968"/><path d="M3.500 10h11M9 5v10" stroke="#fff" stroke-width="1"/></svg>
<div class="a t" style="top:586.50px;font-size:14.5px;line-height:19px;color:#e1e4ea;letter-spacing:0.05px;left:991px;">Письмо о корректировке - мои ответы</div>
<div class="a" style="left:865px;top:719.5px;width:450px;height:55.5px;background:#14252b;border-radius:5px;"></div>
<svg class="a" style="left:865px;top:719.5px;" width="450" height="55.5" viewBox="0 0 450 55.5" ><rect x=".5" y=".5" width="449" height="54.500" rx="5" fill="none" stroke="#1f5a48" stroke-width="1.200" stroke-dasharray="7 5"/></svg>
<div class="a t" style="top:729.20px;font-size:13.7px;line-height:18px;color:#fff;font-weight:700;left:690px;width:800px;text-align:center;">Перетяните файл в эту область или</div>
<div class="a t" style="left:690px;width:800px;text-align:center;top:747.5px;font-size:12.300px;line-height:16px;color:#31c07b;letter-spacing:.2px"><span style="border-bottom:1px solid #31c07b;">загрузите с компьютера</span></div>
<div class="a" style="left:865px;top:793.3px;width:215px;height:39.5px;background:#484d5e;border-radius:5px;"></div>
<div class="a t" style="top:802.80px;font-size:16px;line-height:21px;color:#eef0f4;letter-spacing:0.3px;left:902px;">Создать папку</div>
<svg class="a" style="left:1026px;top:805px;" width="18" height="16" viewBox="0 0 18 16" ><g fill="none" stroke="#dfe2ea" stroke-width="1.100" stroke-linecap="round" stroke-linejoin="round"><path d="M1.500 3.500a1.500 1.500 0 0 1 1.500-1.500h3.500l1.500 2h7a1.500 1.500 0 0 1 1.500 1.500v7.500a1.500 1.500 0 0 1-1.500 1.500H3a1.500 1.500 0 0 1-1.500-1.500zM9 7v4.500M6.800 9.200h4.400"/></g></svg>
<div class="a" style="left:1100px;top:793.3px;width:215px;height:39.5px;background:#484d5e;border-radius:5px;"></div>
<div class="a t" style="top:802.80px;font-size:16.1px;line-height:21px;color:#eef0f4;letter-spacing:0.3px;left:1124px;">Загрузить файлы</div>
<svg class="a" style="left:1274px;top:804px;" width="18" height="19" viewBox="0 0 18 19" ><g fill="none" stroke="#dfe2ea" stroke-width="1.100" stroke-linecap="round" stroke-linejoin="round"><path d="M14.500 8V3.500A1.500 1.500 0 0 0 13 2H4a2 2 0 0 0-2 2v10.500A1.500 1.500 0 0 0 3.500 16H9M13 10.500v6M10.800 14.500l2.200 2.200 2.200-2.200"/></g></svg>
<svg class="a" style="left:1711.5px;top:80.5px;" width="13" height="13" viewBox="0 0 13 13" ><path d="M.8.800l11.400 11.400M12.200.800L.8 12.200" stroke="#e5484d" stroke-width="1.200" stroke-linecap="round"/></svg>
<div class="a t" style="top:103.50px;font-size:19.1px;line-height:25px;color:#fff;font-weight:700;left:1355px;">Свойства файла</div>
<div class="a t" style="top:148.00px;font-size:12.3px;line-height:16px;color:#4d5261;letter-spacing:0.2px;left:1355px;">Название файла</div>
<div class="a t" style="top:148.00px;font-size:12.3px;line-height:16px;color:#eef0f4;right:210px;">Советская узел в 3Д</div>
<div class="a" style="left:1456.5px;top:155.5px;width:132.5px;height:2px;background:radial-gradient(circle,#3a3f4e 0.9px,transparent 1.1px) 0 0/3.500px 2px repeat-x;"></div>
<div class="a t" style="top:185.30px;font-size:14px;line-height:18px;color:#dfe2ea;letter-spacing:0.2px;left:1355px;">Версия файла</div>
<svg class="a" style="left:1693px;top:190px;" width="14" height="9" viewBox="0 0 14 9" ><path d="M1.500 1.500L7 7l5.500-5.500" fill="none" stroke="#dfe2ea" stroke-width="1.200" stroke-linecap="round" stroke-linejoin="round"/></svg>
<div class="a" style="left:1355px;top:209px;width:355px;height:203px;background:#212734;border-radius:5px;"></div>
<svg class="a" style="left:1379px;top:226.0px;" width="23" height="29" viewBox="0 0 23 29" ><path d="M2 0h13l8 8v19a2 2 0 0 1-2 2H2a2 2 0 0 1-2-2V2a2 2 0 0 1 2-2z" fill="#eef0f5"/><path d="M15 0l8 8h-6a2 2 0 0 1-2-2z" fill="#c6cad6"/><path d="M0 21h23v6a2 2 0 0 1-2 2H2a2 2 0 0 1-2-2z" fill="#27539a"/><path d="M6.800 0v21M0 9h23" stroke="#b4c2dc" stroke-width="1.300"/><circle cx="6.800" cy="9" r="2.600" fill="#eef0f5" stroke="#7f8aa3" stroke-width="1.300"/><text x="11.500" y="27.300" font-size="5.800" font-weight="700" fill="#fff" text-anchor="middle" font-family="Liberation Sans, sans-serif">DWG</text></svg>
<div class="a t" style="top:226.00px;font-size:12px;line-height:16px;color:#eef0f4;letter-spacing:0.1px;left:1413px;">Советская узел в 3Д .dwg</div>
<div class="a t" style="top:242.50px;font-size:10.2px;line-height:13px;color:#494e5c;letter-spacing:0.1px;left:1413px;">Файл загружен: 05.02.2024</div>
<div class="a t" style="top:234.20px;font-size:11.8px;line-height:15px;color:#eef0f4;right:290.5px;">Вер.4</div>
<svg class="a" style="left:1640px;top:230.5px;" width="20" height="20" viewBox="0 0 20 20" ><polygon points="10.00,2.40 12.23,7.53 17.80,8.07 13.61,11.77 14.82,17.23 10.00,14.40 5.18,17.23 6.39,11.77 2.20,8.07 7.77,7.53" fill="#31c07b" stroke="#31c07b" stroke-width="1.500" stroke-linejoin="round"/></svg>
<svg class="a" style="left:1671.5px;top:231.5px;" width="17.5" height="17.5" viewBox="0 0 18 18" ><g fill="none" stroke="#dfe2ea" stroke-width="1.2" stroke-linecap="round" stroke-linejoin="round"><path d="M9 1.500v10M4.800 7.500L9 11.700l4.200-4.200M1.500 11.500v3a2 2 0 0 0 2 2h11a2 2 0 0 0 2-2v-3"/></g></svg>
<svg class="a" style="left:1379px;top:273.0px;" width="23" height="29" viewBox="0 0 23 29" ><path d="M2 0h13l8 8v19a2 2 0 0 1-2 2H2a2 2 0 0 1-2-2V2a2 2 0 0 1 2-2z" fill="#eef0f5"/><path d="M15 0l8 8h-6a2 2 0 0 1-2-2z" fill="#c6cad6"/><path d="M0 21h23v6a2 2 0 0 1-2 2H2a2 2 0 0 1-2-2z" fill="#27539a"/><path d="M6.800 0v21M0 9h23" stroke="#b4c2dc" stroke-width="1.300"/><circle cx="6.800" cy="9" r="2.600" fill="#eef0f5" stroke="#7f8aa3" stroke-width="1.300"/><text x="11.500" y="27.300" font-size="5.800" font-weight="700" fill="#fff" text-anchor="middle" font-family="Liberation Sans, sans-serif">DWG</text></svg>
<div class="a t" style="top:273.00px;font-size:12px;line-height:16px;color:#eef0f4;letter-spacing:0.1px;left:1413px;">Советская узел в 3Д .dwg</div>
<div class="a t" style="top:289.50px;font-size:10.2px;line-height:13px;color:#494e5c;letter-spacing:0.1px;left:1413px;">Файл загружен: 05.02.2024</div>
<div class="a t" style="top:281.20px;font-size:11.8px;line-height:15px;color:#eef0f4;right:290.5px;">Вер.3</div>
<svg class="a" style="left:1640px;top:277.5px;" width="20" height="20" viewBox="0 0 20 20" ><polygon points="10.00,2.40 12.23,7.53 17.80,8.07 13.61,11.77 14.82,17.23 10.00,14.40 5.18,17.23 6.39,11.77 2.20,8.07 7.77,7.53" fill="none" stroke="#dfe2ea" stroke-width="1.200" stroke-linejoin="round"/></svg>
<svg class="a" style="left:1671.5px;top:278.5px;" width="17.5" height="17.5" viewBox="0 0 18 18" ><g fill="none" stroke="#dfe2ea" stroke-width="1.2" stroke-linecap="round" stroke-linejoin="round"><path d="M9 1.500v10M4.800 7.500L9 11.700l4.200-4.200M1.500 11.500v3a2 2 0 0 0 2 2h11a2 2 0 0 0 2-2v-3"/></g></svg>
<svg class="a" style="left:1379px;top:320.0px;" width="23" height="29" viewBox="0 0 23 29" ><path d="M2 0h13l8 8v19a2 2 0 0 1-2 2H2a2 2 0 0 1-2-2V2a2 2 0 0 1 2-2z" fill="#eef0f5"/><path d="M15 0l8 8h-6a2 2 0 0 1-2-2z" fill="#c6cad6"/><path d="M0 21h23v6a2 2 0 0 1-2 2H2a2 2 0 0 1-2-2z" fill="#27539a"/><path d="M6.800 0v21M0 9h23" stroke="#b4c2dc" stroke-width="1.300"/><circle cx="6.800" cy="9" r="2.600" fill="#eef0f5" stroke="#7f8aa3" stroke-width="1.300"/><text x="11.500" y="27.300" font-size="5.800" font-weight="700" fill="#fff" text-anchor="middle" font-family="Liberation Sans, sans-serif">DWG</text></svg>
<div class="a t" style="top:320.00px;font-size:12px;line-height:16px;color:#eef0f4;letter-spacing:0.1px;left:1413px;">Советская узел в 3Д .dwg</div>
<div class="a t" style="top:336.50px;font-size:10.2px;line-height:13px;color:#494e5c;letter-spacing:0.1px;left:1413px;">Файл загружен: 05.02.2024</div>
<div class="a t" style="top:328.20px;font-size:11.8px;line-height:15px;color:#eef0f4;right:290.5px;">Вер.2</div>
<svg class="a" style="left:1640px;top:324.5px;" width="20" height="20" viewBox="0 0 20 20" ><polygon points="10.00,2.40 12.23,7.53 17.80,8.07 13.61,11.77 14.82,17.23 10.00,14.40 5.18,17.23 6.39,11.77 2.20,8.07 7.77,7.53" fill="none" stroke="#dfe2ea" stroke-width="1.200" stroke-linejoin="round"/></svg>
<svg class="a" style="left:1671.5px;top:325.5px;" width="17.5" height="17.5" viewBox="0 0 18 18" ><g fill="none" stroke="#dfe2ea" stroke-width="1.2" stroke-linecap="round" stroke-linejoin="round"><path d="M9 1.500v10M4.800 7.500L9 11.700l4.200-4.200M1.500 11.500v3a2 2 0 0 0 2 2h11a2 2 0 0 0 2-2v-3"/></g></svg>
<svg class="a" style="left:1379px;top:367.0px;" width="23" height="29" viewBox="0 0 23 29" ><path d="M2 0h13l8 8v19a2 2 0 0 1-2 2H2a2 2 0 0 1-2-2V2a2 2 0 0 1 2-2z" fill="#eef0f5"/><path d="M15 0l8 8h-6a2 2 0 0 1-2-2z" fill="#c6cad6"/><path d="M0 21h23v6a2 2 0 0 1-2 2H2a2 2 0 0 1-2-2z" fill="#27539a"/><path d="M6.800 0v21M0 9h23" stroke="#b4c2dc" stroke-width="1.300"/><circle cx="6.800" cy="9" r="2.600" fill="#eef0f5" stroke="#7f8aa3" stroke-width="1.300"/><text x="11.500" y="27.300" font-size="5.800" font-weight="700" fill="#fff" text-anchor="middle" font-family="Liberation Sans, sans-serif">DWG</text></svg>
<div class="a t" style="top:367.00px;font-size:12px;line-height:16px;color:#eef0f4;letter-spacing:0.1px;left:1413px;">Советская узел в 3Д .dwg</div>
<div class="a t" style="top:383.50px;font-size:10.2px;line-height:13px;color:#494e5c;letter-spacing:0.1px;left:1413px;">Файл загружен: 05.02.2024</div>
<div class="a t" style="top:375.20px;font-size:11.8px;line-height:15px;color:#eef0f4;right:290.5px;">Вер.1</div>
<svg class="a" style="left:1640px;top:371.5px;" width="20" height="20" viewBox="0 0 20 20" ><polygon points="10.00,2.40 12.23,7.53 17.80,8.07 13.61,11.77 14.82,17.23 10.00,14.40 5.18,17.23 6.39,11.77 2.20,8.07 7.77,7.53" fill="none" stroke="#dfe2ea" stroke-width="1.200" stroke-linejoin="round"/></svg>
<svg class="a" style="left:1671.5px;top:372.5px;" width="17.5" height="17.5" viewBox="0 0 18 18" ><g fill="none" stroke="#dfe2ea" stroke-width="1.2" stroke-linecap="round" stroke-linejoin="round"><path d="M9 1.500v10M4.800 7.500L9 11.700l4.200-4.200M1.500 11.500v3a2 2 0 0 0 2 2h11a2 2 0 0 0 2-2v-3"/></g></svg>
<div class="a t" style="top:432.70px;font-size:12.3px;line-height:16px;color:#4d5261;letter-spacing:0.2px;left:1355px;">Дата загрузки</div>
<div class="a t" style="top:432.70px;font-size:12.3px;line-height:16px;color:#eef0f4;right:210px;">16.10.2023</div>
<div class="a" style="left:1441.5px;top:440.2px;width:205.0px;height:2px;background:radial-gradient(circle,#3a3f4e 0.9px,transparent 1.1px) 0 0/3.500px 2px repeat-x;"></div>
<div class="a t" style="top:468.70px;font-size:12.3px;line-height:16px;color:#4d5261;letter-spacing:0.2px;left:1355px;">Кто загрузил</div>
<div class="a t" style="top:468.70px;font-size:12.3px;line-height:16px;color:#eef0f4;right:210px;">Валентинов. А.В</div>
<div class="a" style="left:1435.5px;top:476.2px;width:175.0px;height:2px;background:radial-gradient(circle,#3a3f4e 0.9px,transparent 1.1px) 0 0/3.500px 2px repeat-x;"></div>
<div class="a t" style="top:504.70px;font-size:12.3px;line-height:16px;color:#4d5261;letter-spacing:0.2px;left:1355px;">Размер файла</div>
<div class="a t" style="top:504.70px;font-size:12.3px;line-height:16px;color:#eef0f4;right:210px;">37 Мб</div>
<div class="a" style="left:1442.5px;top:512.2px;width:229.0px;height:2px;background:radial-gradient(circle,#3a3f4e 0.9px,transparent 1.1px) 0 0/3.500px 2px repeat-x;"></div>
<div class="a" style="left:1355px;top:541px;width:90px;height:38px;background:#31c07b;border-radius:3px;"></div>
<div class="a t" style="top:551.30px;font-size:14px;line-height:18px;color:#fff;letter-spacing:0.3px;left:1000px;width:800px;text-align:center;">Согл</div>
<div class="a t" style="top:541.50px;font-size:12px;line-height:16px;color:#4d5261;letter-spacing:0.2px;left:1465px;">Дата согласования</div>
<div class="a t" style="top:541.50px;font-size:12px;line-height:16px;color:#eef0f4;right:210px;">21.02.2024</div>
<div class="a" style="left:1579.5px;top:549.0px;width:67.0px;height:2px;background:radial-gradient(circle,#3a3f4e 0.9px,transparent 1.1px) 0 0/3.500px 2px repeat-x;"></div>
<div class="a t" style="top:561.30px;font-size:12px;line-height:16px;color:#4d5261;letter-spacing:0.2px;left:1465px;">Кто согласовал</div>
<div class="a t" style="top:561.30px;font-size:12px;line-height:16px;color:#eef0f4;right:210px;">Валентинов. А.В</div>
<div class="a" style="left:1558.0px;top:568.8px;width:52.5px;height:2px;background:radial-gradient(circle,#3a3f4e 0.9px,transparent 1.1px) 0 0/3.500px 2px repeat-x;"></div>
<div class="a" style="left:1355px;top:589px;width:90px;height:38px;border-radius:3px;border:1px solid #484d5e;"></div>
<div class="a t" style="top:599.30px;font-size:14px;line-height:18px;color:#6f7483;letter-spacing:0.3px;left:1000px;width:800px;text-align:center;">Утв</div>
<div class="a" style="left:1355px;top:637px;width:90px;height:38px;background:#31c07b;border-radius:3px;"></div>
<div class="a t" style="top:647.30px;font-size:14px;line-height:18px;color:#fff;letter-spacing:0.3px;left:1000px;width:800px;text-align:center;">Н.контр</div>
<div class="a t" style="top:638.00px;font-size:12px;line-height:16px;color:#4d5261;letter-spacing:0.2px;left:1465px;">Прошёл проверку</div>
<div class="a t" style="top:638.00px;font-size:12px;line-height:16px;color:#eef0f4;right:210px;">21.02.2024</div>
<div class="a" style="left:1574.5px;top:645.5px;width:72.0px;height:2px;background:radial-gradient(circle,#3a3f4e 0.9px,transparent 1.1px) 0 0/3.500px 2px repeat-x;"></div>
<div class="a t" style="top:657.80px;font-size:12px;line-height:16px;color:#4d5261;letter-spacing:0.2px;left:1465px;">Кто проверил</div>
<div class="a t" style="top:657.80px;font-size:12px;line-height:16px;color:#eef0f4;right:210px;">Валентинов. А.В</div>
<div class="a" style="left:1549.5px;top:665.3px;width:61.0px;height:2px;background:radial-gradient(circle,#3a3f4e 0.9px,transparent 1.1px) 0 0/3.500px 2px repeat-x;"></div>
<svg class="a" style="left:1614px;top:884px;" width="32" height="40" viewBox="0 0 32 40" ><rect x="11.300" y="1" width="9.400" height="6" rx=".8" fill="none" stroke="#7d939c" stroke-width="1.800"/><rect x=".7" y="5.400" width="30.500" height="7.300" rx="1.500" fill="#7d939c"/><path d="M3 12.700h26v24a2.300 2.300 0 0 1-2.300 2.300H5.300A2.300 2.300 0 0 1 3 36.700z" fill="#dfe4e7"/><path d="M8.500 18.700v14.100M15.600 18.700v14.100" stroke="#8a9aa0" stroke-width="2"/><path d="M22.600 16v11.500" stroke="#8a9aa0" stroke-width="2"/></svg>
<div class="a" style="left:1690px;top:883px;width:40px;height:40px;background:#4b8fc0;border-radius:20px;"></div>
<svg class="a" style="left:1698px;top:891px;" width="24" height="24" viewBox="0 0 24 24" ><circle cx="12" cy="12" r="11.300" fill="none" stroke="#e8f1f7" stroke-width="1.100"/><text x="12" y="16.800" font-size="13.500" fill="#eaf2f8" text-anchor="middle" font-family="Liberation Sans, sans-serif">?</text></svg>
</body></html>
